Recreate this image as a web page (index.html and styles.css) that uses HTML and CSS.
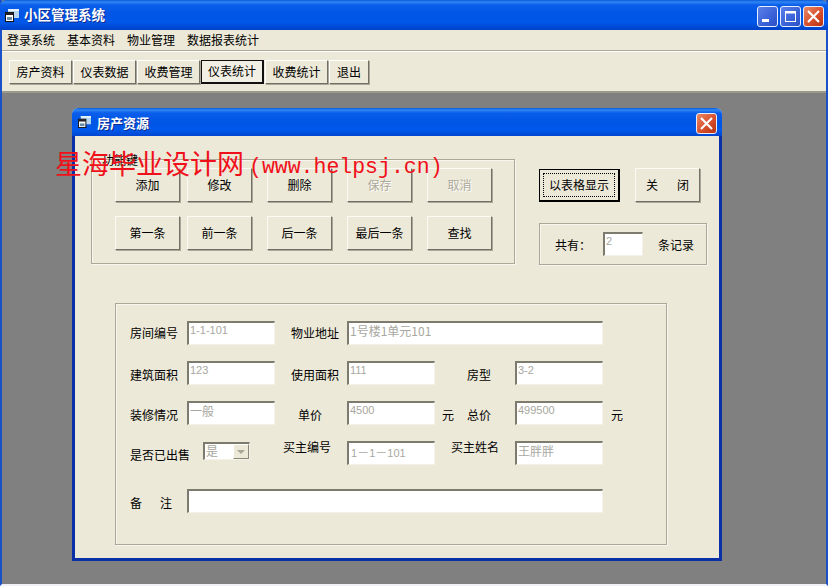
FILE: index.html
```html
<!DOCTYPE html>
<html lang="zh-CN">
<head>
<meta charset="utf-8">
<title>小区管理系统</title>
<link rel="stylesheet" href="styles.css">
</head>
<body>
<div class="window">
  <header class="titlebar main-title">
    <svg class="app-icon" width="14" height="13" viewBox="0 0 14 13"><rect x="3" y="0" width="11" height="9" fill="#b4d6ee"/><rect x="3" y="0" width="11" height="2" fill="#e8f2fa"/><rect x="0.5" y="3.5" width="8" height="9" fill="#fff" stroke="#111"/><rect x="0.5" y="3.5" width="8" height="2.5" fill="#222"/><rect x="2" y="8" width="5" height="3" fill="#6a8fa4"/></svg>
    <span class="title-text">小区管理系统</span>
    <div class="caption-buttons">
      <span class="cap cap-blue"><svg width="21" height="21" viewBox="0 0 21 21"><rect x="5" y="13" width="7" height="3" fill="#fff"/></svg></span>
      <span class="cap cap-blue"><svg width="21" height="21" viewBox="0 0 21 21"><rect x="5.5" y="5.5" width="10" height="10" fill="none" stroke="#fff"/><rect x="5" y="5" width="11" height="2.5" fill="#fff"/></svg></span>
      <span class="cap cap-red"><svg width="21" height="21" viewBox="0 0 21 21"><path d="M5 5l11 11M16 5L5 16" stroke="#fff" stroke-width="2.2" fill="none"/></svg></span>
    </div>
  </header>
  <nav class="menubar">
    <span class="menu-item">登录系统</span>
    <span class="menu-item">基本资料</span>
    <span class="menu-item">物业管理</span>
    <span class="menu-item">数据报表统计</span>
  </nav>
  <div class="toolbar">
    <span class="tool">房产资料</span>
    <span class="tool">仪表数据</span>
    <span class="tool">收费管理</span>
    <span class="tool tool-down">仪表统计</span>
    <span class="tool">收费统计</span>
    <span class="tool tool-short">退出</span>
  </div>
  <main class="desktop">
    <section class="dialog">
      <header class="titlebar dialog-title">
        <svg class="app-icon" width="13" height="12" viewBox="0 0 14 13"><rect x="3" y="0" width="11" height="9" fill="#b4d6ee"/><rect x="3" y="0" width="11" height="2" fill="#e8f2fa"/><rect x="0.5" y="3.5" width="8" height="9" fill="#fff" stroke="#111"/><rect x="0.5" y="3.5" width="8" height="2.5" fill="#222"/><rect x="2" y="8" width="5" height="3" fill="#6a8fa4"/></svg>
        <span class="title-text">房产资源</span>
        <div class="caption-buttons">
          <span class="cap cap-red"><svg width="21" height="21" viewBox="0 0 21 21"><path d="M5 5l11 11M16 5L5 16" stroke="#fff" stroke-width="2.2" fill="none"/></svg></span>
        </div>
      </header>
      <div class="dialog-body">
        <div class="top-area">
          <div class="group func-group">
            <span class="legend">功能键</span>
            <div class="func-grid">
              <span class="btn">添加</span>
              <span class="btn">修改</span>
              <span class="btn">删除</span>
              <span class="btn btn-off">保存</span>
              <span class="btn btn-off">取消</span>
              <span class="btn">第一条</span>
              <span class="btn">前一条</span>
              <span class="btn">后一条</span>
              <span class="btn">最后一条</span>
              <span class="btn">查找</span>
            </div>
          </div>
          <div class="side">
            <div class="side-buttons">
              <span class="btn btn-default"><span class="focus-ring">以表格显示</span></span>
              <span class="btn btn-close"><span>关</span><span>闭</span></span>
            </div>
            <div class="group count-group">
              <span>共有：</span>
              <span class="field count-field">2</span>
              <span>条记录</span>
            </div>
          </div>
        </div>
        <div class="group form-group">
          <span class="lbl c1">房间编号</span>
          <span class="field num">1-1-101</span>
          <span class="lbl lbl-c3">物业地址</span>
          <span class="field field-long">1号楼1单元101</span>

          <span class="lbl c1 low">建筑面积</span>
          <span class="field num">123</span>
          <span class="lbl lbl-c3 low">使用面积</span>
          <span class="field num">111</span>
          <span class="lbl lbl-c5 low">房型</span>
          <span class="field num">3-2</span>

          <span class="lbl c1 low">装修情况</span>
          <span class="field">一般</span>
          <span class="lbl lbl-price low">单价</span>
          <span class="field num">4500</span>
          <span class="lbl low unit-pair"><span>元</span><span>总价</span></span>
          <span class="field num">499500</span>
          <span class="lbl low unit">元</span>

          <span class="lbl c1 lbl-sold">是否已出售</span>
          <span class="combo"><span class="combo-text">是</span><span class="combo-arrow"><svg width="14" height="14" viewBox="0 0 14 14"><path d="M3 5h8l-4 4z" fill="#a8a699"/></svg></span></span>
          <span class="lbl lbl-buyer high">买主编号</span>
          <span class="field num spaced">1<span class="wide">－</span>1<span class="wide">－</span>101</span>
          <span class="lbl lbl-buyer2 high">买主姓名</span>
          <span class="field">王胖胖</span>

          <span class="lbl c1 note-label"><span>备</span><span>注</span></span>
          <span class="field field-note"></span>
        </div>
      </div>
    </section>
  </main>
  <div class="watermark">星海毕业设计网<span class="wm-latin">(www.helpsj.cn)</span></div>
</div>
</body>
</html>
```

FILE: styles.css
```css
* { box-sizing: border-box; }
html, body { margin: 0; padding: 0; }
body {
  width: 828px;
  height: 586px;
  overflow: hidden;
  font-family: "Noto Sans CJK SC", sans-serif;
  font-size: 12px;
  color: #000;
  background: #808080;
}
.window {
  position: relative;
  width: 828px;
  height: 586px;
  display: flex;
  flex-direction: column;
  background: #808080;
  border-left: 2px solid #1a50c8;
  border-right: 2px solid #1a50c8;
  border-bottom: 2px solid #f0f2f8;
}
.titlebar {
  display: flex;
  align-items: center;
  color: #fff;
  background: linear-gradient(#0a5ad8 0, #2f86f4 2px, #0a5eea 5px, #0055e5 14px, #0058ea 22px, #0044cc 29px);
}
.main-title {
  height: 30px;
  margin: 0 -2px;
  padding-left: 5px;
  border-radius: 6px 6px 0 0;
}
.app-icon { flex: none; }
.title-text {
  font-weight: 700;
  font-size: 13.5px;
  line-height: 1;
  text-shadow: 1px 1px 0 #0a2a90;
  white-space: nowrap;
}
.main-title .title-text { margin-left: 5px; }
.caption-buttons {
  display: flex;
  gap: 2px;
  margin-left: auto;
  margin-right: 4px;
  margin-top: 3px;
}
.cap {
  width: 21px;
  height: 21px;
  border: 1px solid #e8eefc;
  border-radius: 3px;
  display: block;
  overflow: hidden;
}
.cap svg { display: block; margin: -1px; }
.cap-blue { background: linear-gradient(135deg, #5a80e8, #3a62d8 60%, #2a50c4); }
.cap-red { background: linear-gradient(135deg, #e88a68, #d8502c 55%, #b83212); }

.menubar {
  height: 21px;
  display: flex;
  align-items: center;
  padding-left: 5px;
  gap: 12px;
  background: #ece9d8;
  border-bottom: 1px solid #aca899;
  box-shadow: 0 1px 0 #fff;
  position: relative;
}
.menu-item { white-space: nowrap; line-height: 20px; }

.toolbar {
  height: 42px;
  display: flex;
  align-items: flex-start;
  padding: 9px 0 0 7px;
  gap: 1px;
  background: #ece9d8;
  border-bottom: 2px solid #9c9a8c;
}
.tool {
  width: 63px;
  height: 24px;
  padding-bottom: 2px;
  display: flex;
  align-items: center;
  justify-content: center;
  background: #ece9d8;
  border: 1px solid;
  border-color: #fff #716f64 #716f64 #fff;
  box-shadow: 1px 1px 0 #aca899;
  white-space: nowrap;
}
.tool-short { width: 40px; }
.tool-down {
  border: 1px solid #111;
  border-width: 1px 2px 2px 1px;
  box-shadow: none;
  background: #f2f0e4;
}

.desktop { flex: 1; position: relative; }
.dialog {
  position: absolute;
  left: 70px;
  top: 15px;
  width: 650px;
  height: 453px;
  display: flex;
  flex-direction: column;
  border-radius: 6px 6px 0 0;
  background: #ece9d8;
}
.dialog-title {
  height: 28px;
  padding-left: 6px;
  border-radius: 6px 6px 0 0;
}
.dialog-title .title-text { margin-left: 6px; font-size: 13px; }
.dialog-title .caption-buttons { margin-right: 5px; margin-top: 2px; }
.dialog-body {
  flex: 1;
  background: #ece9d8;
  border: solid #0a30a8;
  border-width: 0 3px 3px 3px;
}

.top-area { display: flex; height: 167px; align-items: flex-start; }
.group {
  border: 1px solid #aca899;
  box-shadow: 1px 1px 0 #f8f7ef, inset 1px 1px 0 #f8f7ef;
}
.func-group {
  position: relative;
  width: 424px;
  height: 105px;
  margin: 23px 0 0 16px;
  padding: 8px 0 0 23px;
}
.legend {
  position: absolute;
  left: 10px;
  top: -7px;
  line-height: 14px;
}
.func-grid {
  display: grid;
  grid-template-columns: 72px 80px 80px 80px 65px;
  grid-auto-rows: 34px;
  row-gap: 14px;
}
.btn {
  width: 65px;
  height: 34px;
  padding-bottom: 2px;
  display: flex;
  align-items: center;
  justify-content: center;
  background: #ece9d8;
  border: 1px solid;
  border-color: #fbfaf4 #716f64 #716f64 #fbfaf4;
  box-shadow: 1px 1px 0 #aca899;
  white-space: nowrap;
}
.btn-off { color: #aca899; text-shadow: 1px 1px 0 #fff; }
.btn-default {
  width: 81px;
  height: 33px;
  margin-top: 1px;
  border: 1px solid #000;
  border-width: 1px 2px 2px 1px;
  box-shadow: none;
  padding: 3px;
}
.focus-ring {
  width: 100%;
  height: 100%;
  padding: 0 0 2px 0;
  display: flex;
  align-items: center;
  justify-content: center;
  border: 1px dotted #000;
}
.btn-close { gap: 19px; }
.side { margin: 32px 0 0 24px; width: 168px; }
.side-buttons { display: flex; gap: 15px; height: 34px; }
.count-group {
  width: 168px;
  height: 42px;
  margin-top: 21px;
  display: flex;
  align-items: center;
  padding-left: 15px;
}
.count-group > span:last-child { margin-left: 15px; }

.field {
  display: block;
  width: 88px;
  height: 24px;
  padding: 0 0 0 1px;
  font-size: 12px;
  line-height: 15px;
  color: #a8a79e;
  background: #fff;
  border: solid;
  border-width: 2px 1px 1px 2px;
  border-color: #7d7b6d #f4f2e8 #f4f2e8 #7d7b6d;
  white-space: nowrap;
  overflow: hidden;
}
.num { font-family: "Liberation Sans", sans-serif; font-size: 11px; }
.wide { font-family: "Noto Sans CJK SC", sans-serif; font-size: 12px; }
.count-field {
  width: 40px;
  margin-left: 12px;
  font-family: "Liberation Sans", sans-serif;
  font-size: 11px;
}

.form-group {
  width: 552px;
  height: 242px;
  margin-left: 40px;
  padding: 17px 0 0 14px;
  display: grid;
  grid-template-columns: 57px 88px 72px 88px 80px 88px 40px;
  grid-template-rows: repeat(4, 24px) 32px;
  row-gap: 16px;
  align-items: start;
}
.lbl { white-space: nowrap; line-height: 24px; }
.c1 { grid-column: 1; }
.low { margin-top: 2px; }
.high { margin-top: -6px; }
.lbl-c3 { margin-left: 16px; grid-column: 3; }
.lbl-c5 { margin-left: 32px; grid-column: 5; }
.lbl-price { margin-left: 23px; }
.unit-pair {
  display: flex;
  gap: 13px;
  margin-left: 7px;
}
.unit { margin-left: 8px; }
.field-long { grid-column: 4 / span 3; width: 256px; }
.lbl-sold { margin-top: 2px; }
.combo {
  width: 47px;
  height: 18px;
  margin: 1px 0 0 16px;
  display: flex;
  background: #fff;
  border: solid;
  border-width: 2px 1px 1px 2px;
  border-color: #7d7b6d #f4f2e8 #f4f2e8 #7d7b6d;
  color: #a8a79e;
  line-height: 14px;
}
.combo-text { flex: 1; padding-left: 1px; }
.combo-arrow {
  width: 16px;
  background: #ece9d8;
  border: 1px solid;
  border-color: #fff #8a887a #8a887a #fff;
  display: flex;
  align-items: center;
  justify-content: center;
}
.lbl-buyer { margin-left: 8px; }
.lbl-buyer2 { margin-left: 16px; }
.spaced { padding-left: 2px; line-height: 17px; }
.note-label {
  grid-row: 5;
  display: flex;
  gap: 18px;
  margin-top: 10px;
}
.field-note {
  grid-column: 2 / span 5;
  grid-row: 5;
  width: 416px;
  margin-top: 8px;
}

.watermark {
  position: absolute;
  left: 53px;
  top: 146px;
  font-size: 27px;
  line-height: 34px;
  color: #f0101a;
  white-space: nowrap;
  pointer-events: none;
}
.wm-latin {
  font-family: "Liberation Mono", monospace;
  font-size: 21.5px;
  margin-left: 5px;
  vertical-align: 1px;
}
```
